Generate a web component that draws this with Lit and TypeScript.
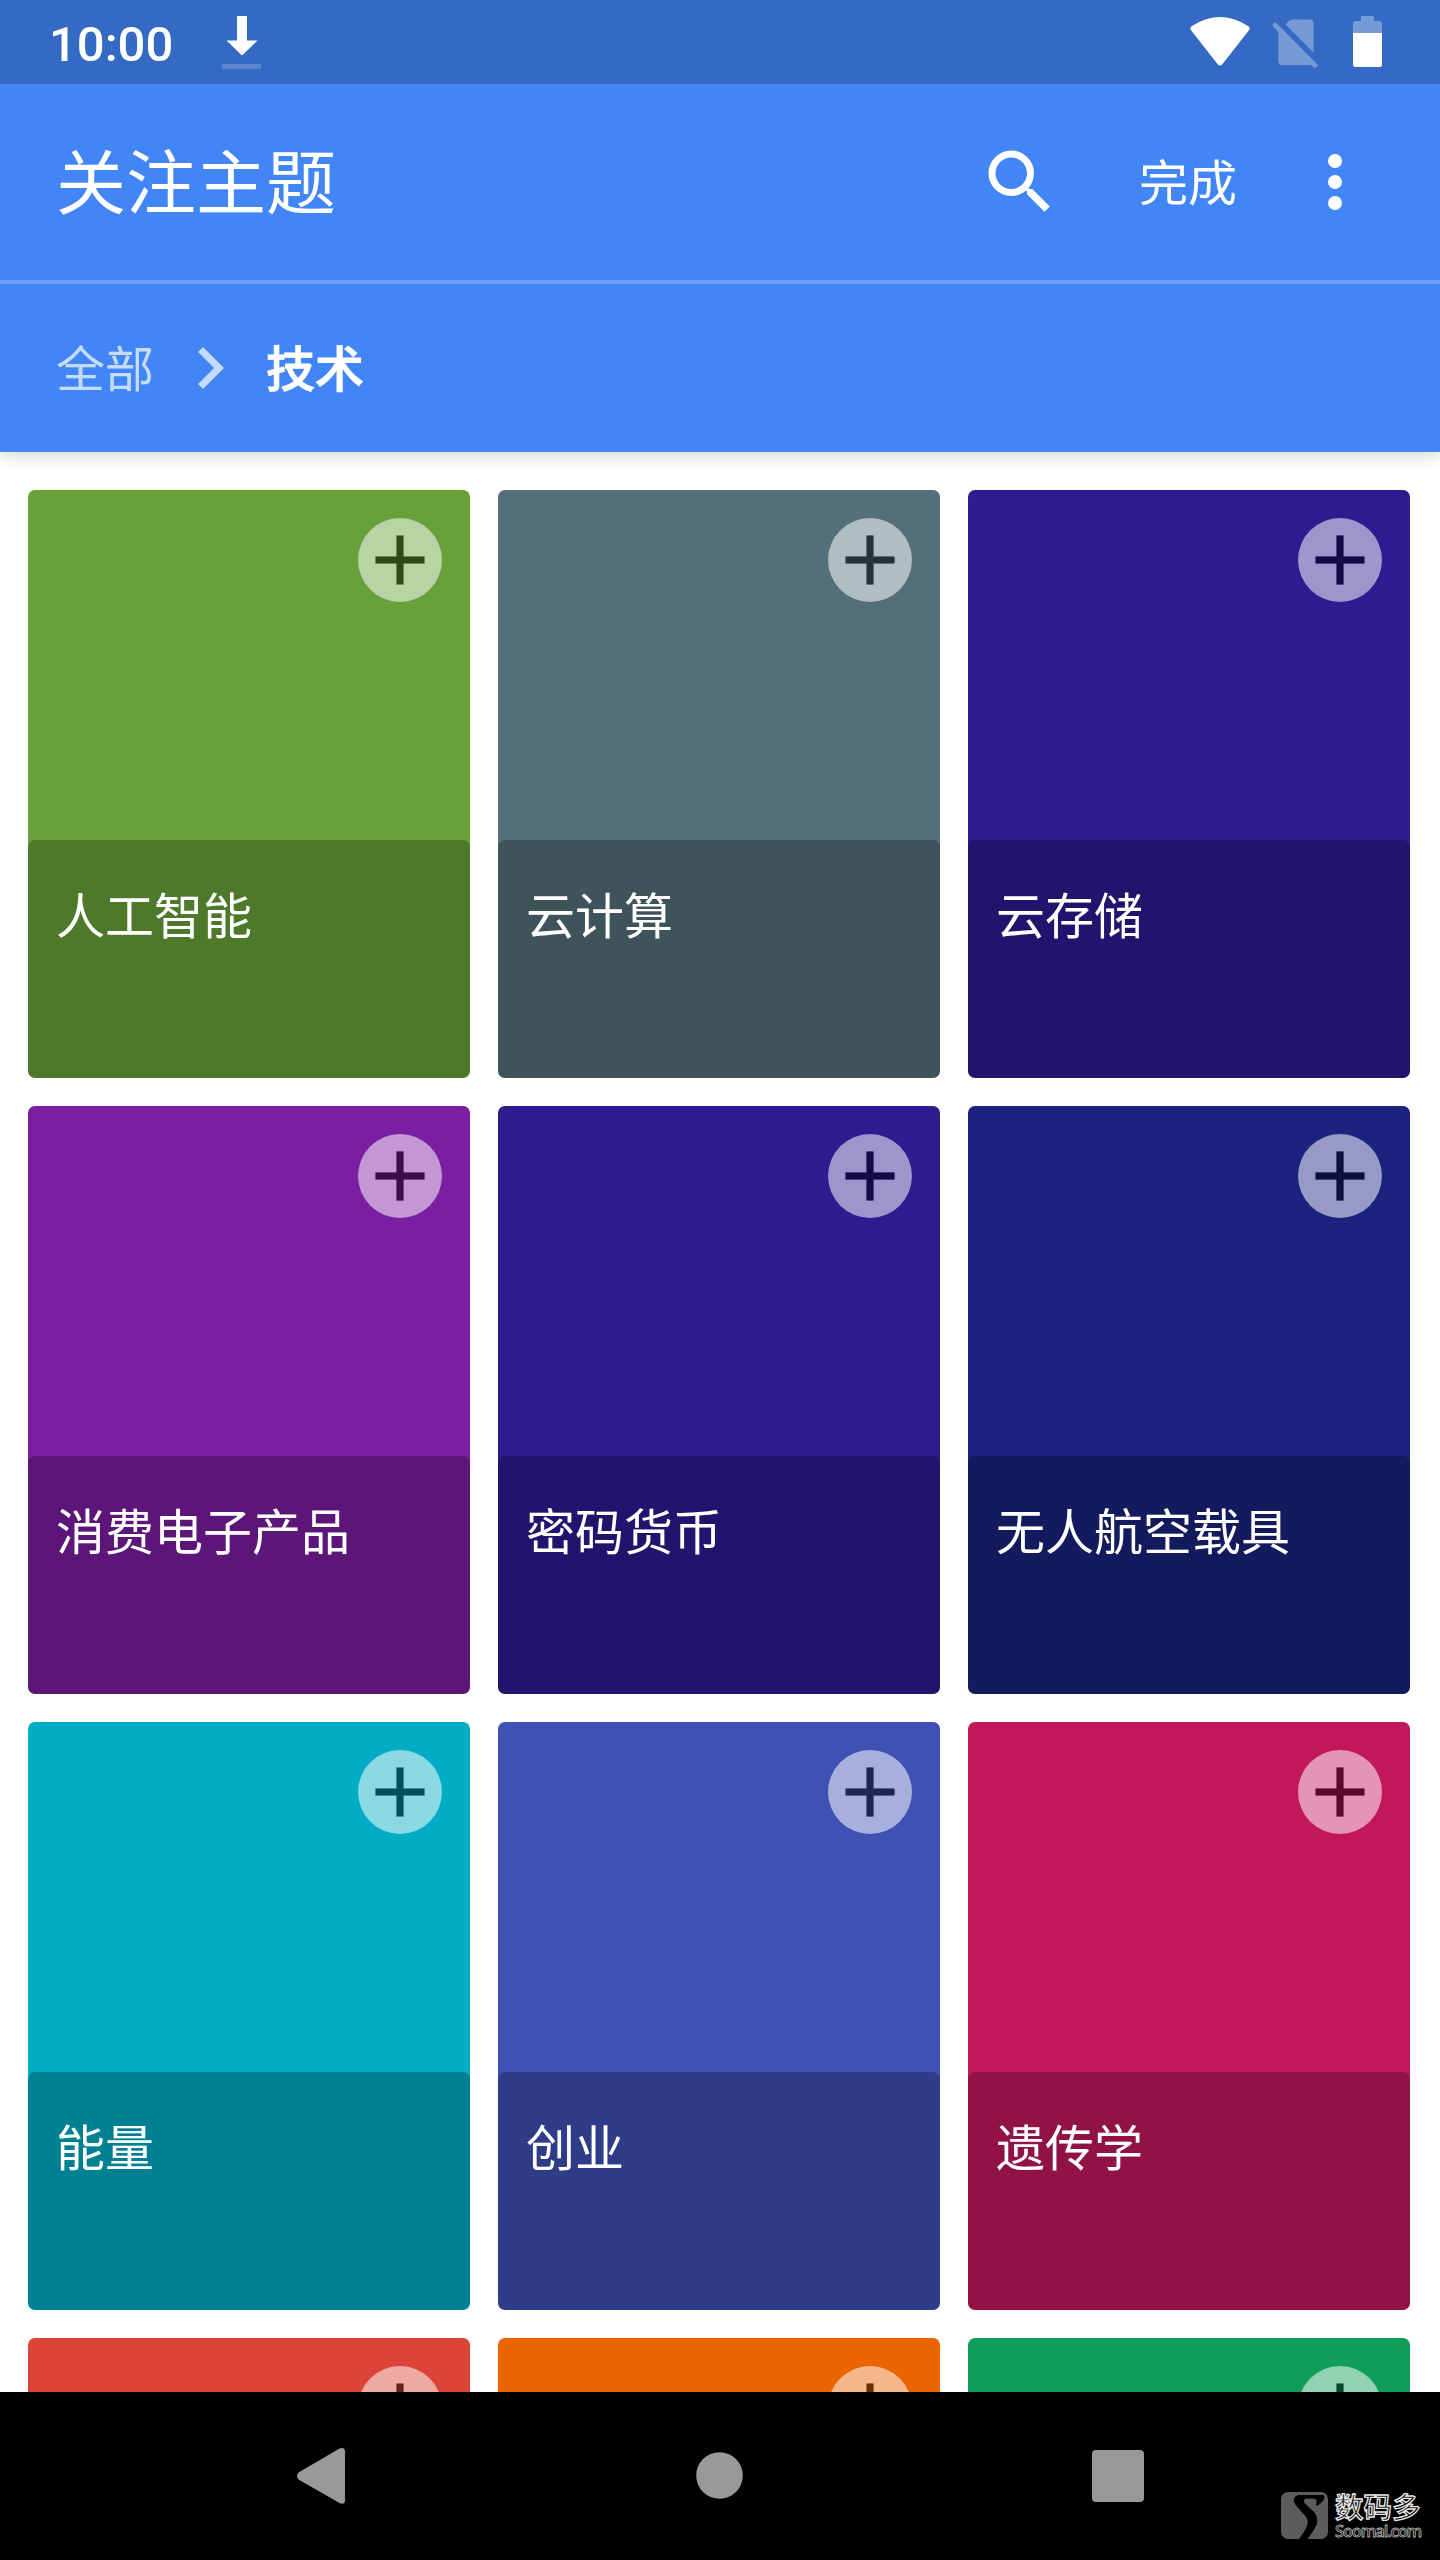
import { LitElement, html, css, svg } from "lit";
import { customElement, property } from "lit/decorators.js";

interface Topic {
  name: string;
  color: string;
}

const TOPICS: Topic[] = [
  { name: "人工智能", color: "#68a039" },
  { name: "云计算", color: "#546f7a" },
  { name: "云存储", color: "#2f1a90" },
  { name: "消费电子产品", color: "#7b1ea1" },
  { name: "密码货币", color: "#2f1a90" },
  { name: "无人航空载具", color: "#1b237e" },
  { name: "能量", color: "#00adc3" },
  { name: "创业", color: "#3f51b5" },
  { name: "遗传学", color: "#c2185b" },
  { name: "", color: "#db4437" },
  { name: "", color: "#eb6400" },
  { name: "", color: "#109d58" },
];

@customElement("status-bar")
class StatusBar extends LitElement {
  static styles = css`
    :host {
      display: flex;
      align-items: center;
      justify-content: space-between;
      height: 84px;
      position: relative;
      z-index: 2;
      background: #346ac3;
      color: #fff;
    }
    .left,
    .right {
      display: flex;
      align-items: center;
      height: 84px;
    }
    .left {
      padding-left: 49px;
    }
    .clock {
      width: 163px;
      font: 500 49px/84px Roboto, sans-serif;
      padding-top: 5px;
    }
    svg {
      display: block;
    }
  `;
  render() {
    return html`
      <div class="left">
        <span class="clock">10:00</span>
        <svg width="60" height="84" viewBox="0 0 60 84" fill="#fff">
          <path d="M25 16h10v24.5h10.500L30 55.500 14.500 40.500H25z" />
          <path d="M10 64h39v5H10z" fill-opacity=".2" />
        </svg>
      </div>
      <div class="right">
        <svg width="260" height="84" viewBox="1180 0 260 84" fill="#fff">
          <path
            d="M1191.200 30.500Q1189 28 1192 26Q1206 17 1220 17Q1234 17 1248 26Q1251 28 1248.800 30.500L1222.500 64Q1220 67 1217.500 64Z"
          />
          <g fill-opacity=".32">
            <path d="M1285.500 24.500L1289 21Q1290.500 19.500 1293 19.500H1309.500Q1313.500 19.500 1313.500 23.500V52.500Z" />
            <path
              d="M1276 22.800L1317.500 64.500Q1318 66 1316.800 67Q1315 68.500 1313.300 67L1311 65H1282.500Q1278.300 65 1278.300 60.800V32L1273 26.500Q1272 25 1273.200 23.500Q1274.500 22 1276 22.800Z"
            />
            <path d="M1361 16h13v5h5.500q2.500 0 2.500 2.500V33h-29v-9.500q0-2.500 2.500-2.500h5.500z" />
          </g>
          <path d="M1353 33h29v31.500q0 2.500-2.500 2.500h-24q-2.500 0-2.500-2.500z" />
        </svg>
      </div>
    `;
  }
}

@customElement("topic-card")
class TopicCard extends LitElement {
  @property() name = "";
  @property() color = "#000";
  static styles = css`
    :host {
      display: block;
    }
    .card {
      display: flex;
      flex-direction: column;
      height: 588px;
      border-radius: 7px;
      overflow: hidden;
    }
    .cover {
      display: flex;
      justify-content: flex-end;
      flex: 1;
      padding: 28px 28px 0 0;
    }
    .label {
      box-sizing: border-box;
      height: 238px;
      padding: 37px 28px 0;
      border-radius: 7px;
      background: rgba(0, 0, 0, 0.25);
      color: #fff;
      font-size: 49px;
      line-height: 72px;
      white-space: nowrap;
    }
  `;
  render() {
    return html`
      <div class="card" style="background:${this.color}">
        <div class="cover">
          <svg width="84" height="84" viewBox="0 0 84 84">
            <path
              fill="#fff"
              fill-opacity=".54"
              fill-rule="evenodd"
              d="M42 0a42 42 0 1 1 0 84a42 42 0 1 1 0-84zM38.500 17.500v21h-21v7h21v21h7v-21h21v-7h-21v-21z"
            />
            <path fill-opacity=".54" d="M38.500 17.500v21h-21v7h21v21h7v-21h21v-7h-21v-21z" />
          </svg>
        </div>
        <div class="label">${this.name}</div>
      </div>
    `;
  }
}

@customElement("app-root")
class AppRoot extends LitElement {
  static styles = css`
    :host {
      display: flex;
      flex-direction: column;
      position: relative;
      width: 1440px;
      height: 2560px;
      overflow: hidden;
      background: #fff;
      font-family: "Noto Sans CJK SC", sans-serif;
      color: #fff;
    }
    svg {
      display: block;
      flex: none;
    }
    .head {
      flex: none;
      background: #4286f6;
      box-shadow: 0 2px 18px rgba(0, 0, 0, 0.2);
      z-index: 1;
    }
    .toolbar {
      display: flex;
      align-items: center;
      height: 196px;
      padding: 0 63px 0 56px;
      border-bottom: 4px solid #6ba0fa;
    }
    .title {
      flex: 1;
      padding-bottom: 6px;
      font-size: 70px;
      line-height: 100px;
    }
    .done {
      margin: 0 56px 0 77px;
      padding-bottom: 5px;
      font-size: 49px;
      line-height: 72px;
    }
    .crumbs {
      display: flex;
      align-items: center;
      gap: 14px;
      height: 168px;
      padding-left: 56px;
      font-size: 49px;
      line-height: 72px;
    }
    .parent,
    .current {
      padding-bottom: 5px;
    }
    .parent {
      opacity: 0.7;
    }
    .current {
      font-weight: 500;
      -webkit-text-stroke: 0.9px #fff;
    }
    .content {
      flex: 1;
      min-height: 0;
      overflow: hidden;
    }
    .grid {
      display: grid;
      grid-template-columns: repeat(3, 442px);
      gap: 28px;
      padding: 38px 28px 0;
    }
    .nav {
      flex: none;
      height: 168px;
      background: #000;
      z-index: 1;
    }
    .brand {
      position: absolute;
      z-index: 2;
      left: 1281px;
      top: 2492px;
      display: flex;
      gap: 7px;
      color: #000;
      white-space: nowrap;
    }
    .brand-text {
      display: flex;
      flex-direction: column;
    }
    .brand-name {
      font-size: 28.5px;
      font-weight: 500;
      line-height: 27px;
      -webkit-text-stroke: 1.3px #e8e8e8;
    }
    .brand-site {
      font: 600 16.5px/24px "Open Sans", sans-serif;
      letter-spacing: -1.15px;
      -webkit-text-stroke: 0.9px #a8a8a8;
    }
  `;
  render() {
    return html`
      <status-bar></status-bar>
      <header class="head">
        <div class="toolbar">
          <span class="title">关注主题</span>
          <svg width="84" height="84" viewBox="0 0 24 24" fill="#fff">
            <path
              d="M15.500 14h-.79l-.28-.27A6.471 6.471 0 0 0 16 9.500 6.500 6.500 0 1 0 9.500 16c1.610 0 3.090-.59 4.230-1.570l.27.28v.79l5 4.990L20.490 19l-4.990-5zm-6 0C7.010 14 5 11.990 5 9.500S7.010 5 9.500 5 14 7.010 14 9.500 11.990 14 9.500 14z"
            />
          </svg>
          <span class="done">完成</span>
          <svg width="84" height="84" viewBox="0 0 24 24" fill="#fff">
            ${[6, 12, 18].map((y) => svg`<circle cx="12" cy=${y} r="2" />`)}
          </svg>
        </div>
        <div class="crumbs">
          <span class="parent">全部</span>
          <svg width="84" height="84" viewBox="0 0 24 24" fill="#fff" fill-opacity=".7">
            <path d="M10 6L8.590 7.410 13.170 12l-4.580 4.590L10 18l6-6z" />
          </svg>
          <span class="current">技术</span>
        </div>
      </header>
      <main class="content">
        <div class="grid">
          ${TOPICS.map((t) => html`<topic-card .name=${t.name} .color=${t.color}></topic-card>`)}
        </div>
      </main>
      <nav class="nav">
        <svg width="1440" height="168" viewBox="0 0 1440 168" fill="#999">
          <path d="M298.500 80.500L339.500 56.500Q345 54.500 345 60V108Q345 113.500 339.500 111L298.500 87.500Q295.500 84 298.500 80.500Z" />
          <circle cx="719.500" cy="83.500" r="23.300" />
          <rect x="1092" y="58" width="52" height="52" rx="4" />
        </svg>
      </nav>
      <div class="brand">
        <svg width="47" height="47" viewBox="0 0 47 47">
          <rect width="47" height="47" rx="7" fill="#5c5c5c" />
          <path
            d="M17 3H42.500Q44.500 5 42 9L37 13.500Q33.500 13.500 35.500 11Q37 7 32 6.500H26Q21 7 23.500 11L33 20Q38 26 35.500 33Q32 40 26.500 47H18Q25 38 26.500 32Q27.500 28 24 23.500L14.500 13Q10 6 17 3Z"
          />
        </svg>
        <div class="brand-text">
          <span class="brand-name">数码多</span>
          <span class="brand-site">Soomal.com</span>
        </div>
      </div>
    `;
  }
}
